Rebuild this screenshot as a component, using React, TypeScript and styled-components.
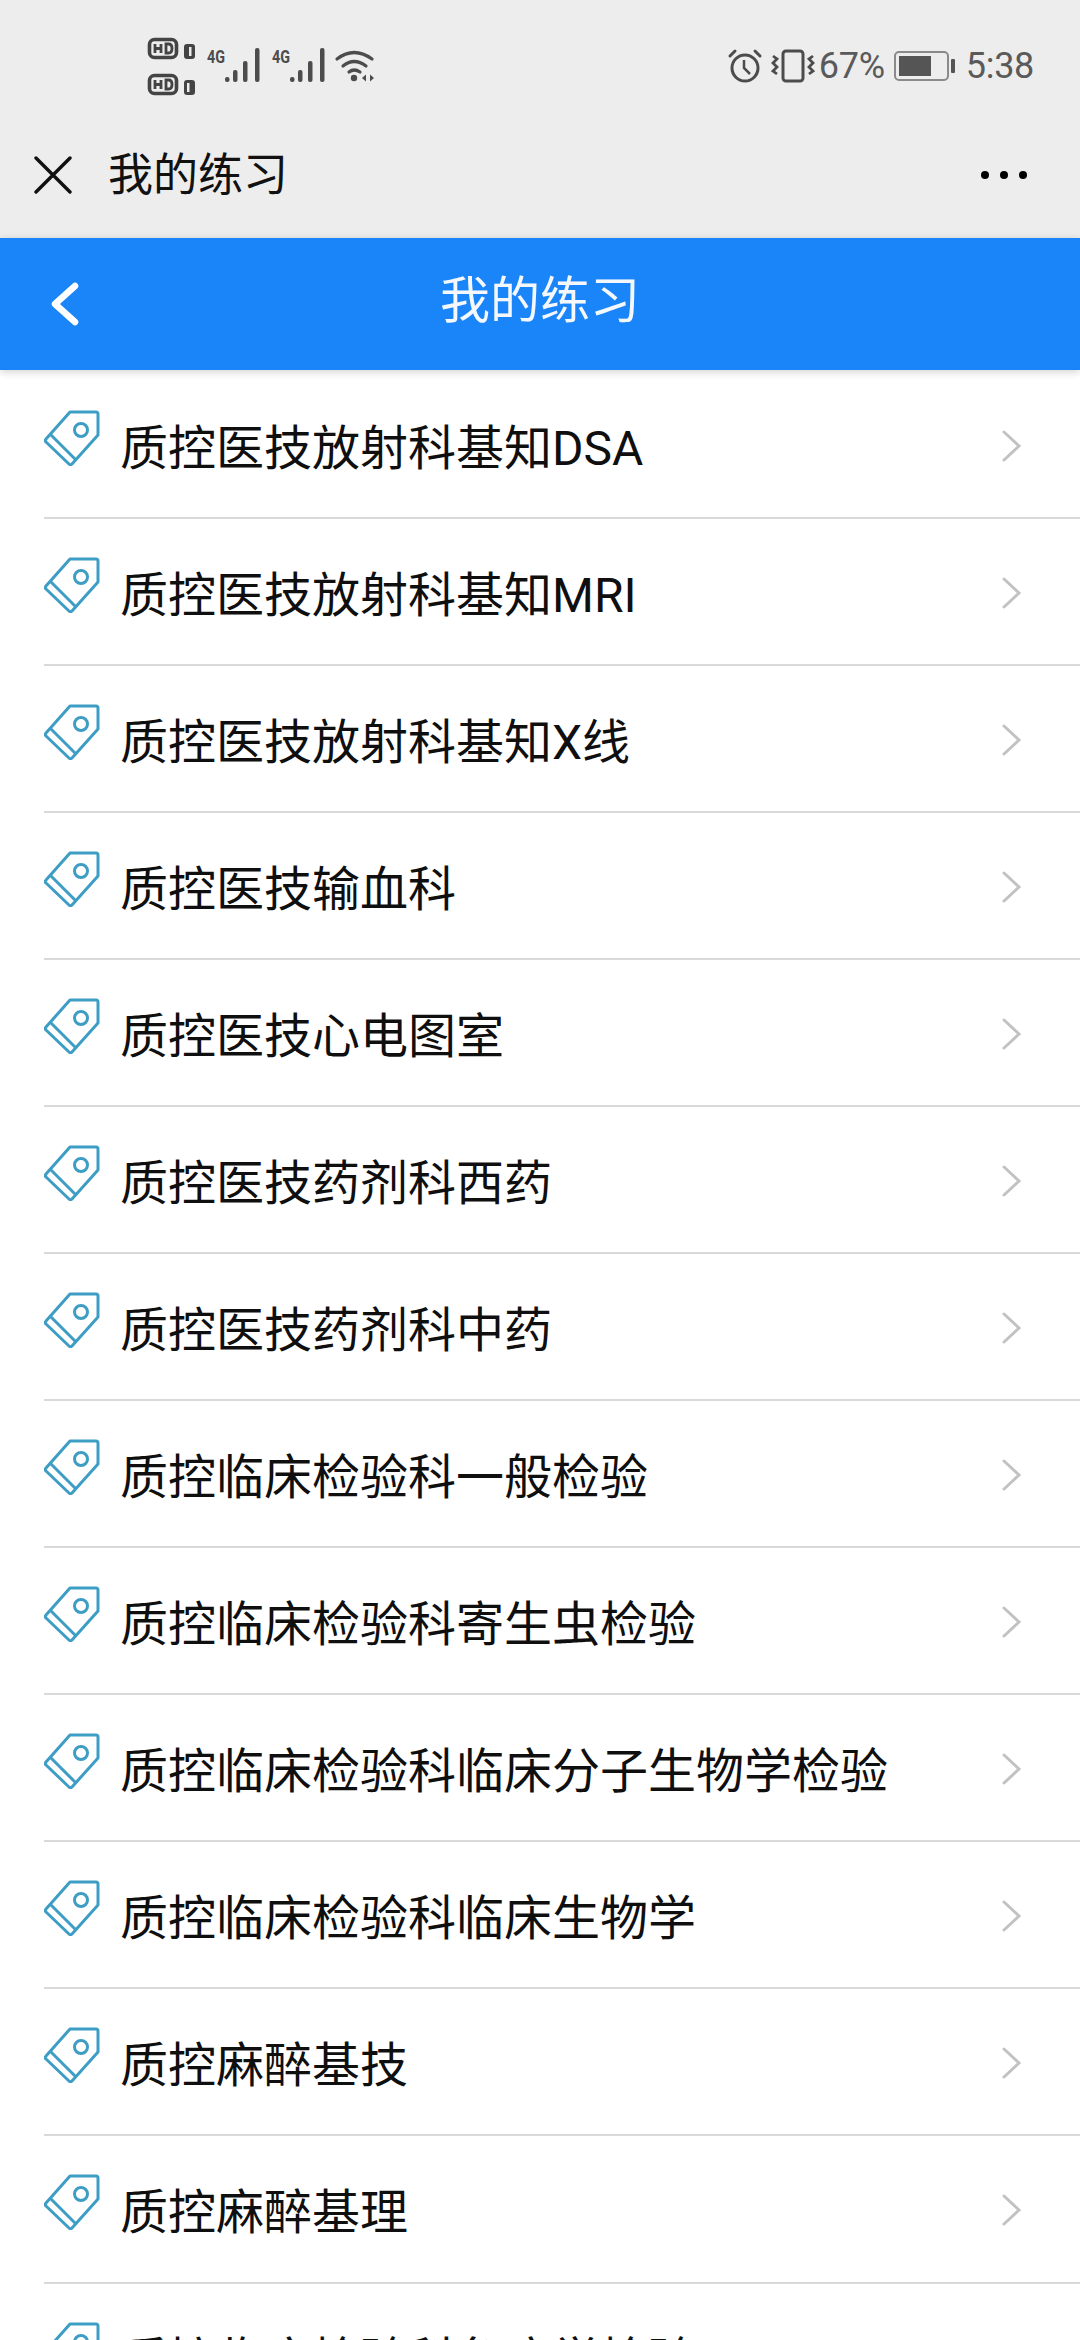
import React from 'react';
import styled, { createGlobalStyle } from 'styled-components';

const items = [
  '质控医技放射科基知DSA',
  '质控医技放射科基知MRI',
  '质控医技放射科基知X线',
  '质控医技输血科',
  '质控医技心电图室',
  '质控医技药剂科西药',
  '质控医技药剂科中药',
  '质控临床检验科一般检验',
  '质控临床检验科寄生虫检验',
  '质控临床检验科临床分子生物学检验',
  '质控临床检验科临床生物学',
  '质控麻醉基技',
  '质控麻醉基理',
  '质控临床检验科免疫学检验',
];

const GlobalStyle = createGlobalStyle`
  html, body {
    margin: 0;
    padding: 0;
    background: #fff;
  }
  body {
    font-family: "Roboto", "Noto Sans CJK SC", sans-serif;
  }
`;

const Page = styled.div`
  width: 1080px;
  height: 2340px;
  overflow: hidden;
  display: flex;
  flex-direction: column;
  background: #fff;
`;

const TopArea = styled.div`
  height: 238px;
  background: #ededed;
  display: flex;
  flex-direction: column;
  flex: none;
`;

const StatusBar = styled.div`
  height: 133px;
  padding: 33px 46px 0 146px;
  box-sizing: border-box;
  display: flex;
  justify-content: space-between;
  align-items: flex-start;
`;

const StatusGroup = styled.div`
  display: flex;
  align-items: center;
  height: 66px;
`;

const StatusSlot = styled.div<{ $left: number }>`
  display: flex;
  align-items: center;
  margin-left: ${(p) => p.$left}px;
`;

const HdStack = styled.div`
  display: flex;
  flex-direction: column;
  gap: 12px;
`;

const StatusIcon = styled.svg`
  display: block;
  overflow: visible;
`;

const StatusText = styled.span`
  font-size: 36px;
  line-height: 66px;
  color: #5a5a5a;
  letter-spacing: -0.3px;
`;

const BrowserBar = styled.div`
  height: 84px;
  padding: 0 52px 0 34px;
  display: flex;
  align-items: center;
  color: #111;
`;

const BrowserTitle = styled.div`
  font-size: 45px;
  margin-left: 36px;
  flex: 1;
  line-height: 1;
`;

const Header = styled.header`
  height: 132px;
  flex: none;
  background: #1a85f8;
  display: flex;
  align-items: center;
  position: relative;
  z-index: 1;
  padding-left: 50px;
  box-shadow: 0 2px 8px rgba(0, 0, 0, 0.18);
`;

const HeaderTitle = styled.h1`
  position: absolute;
  left: 0;
  right: 0;
  top: 0;
  margin: 0;
  text-align: center;
  font-size: 50px;
  font-weight: 400;
  line-height: 126px;
  color: #f4f8fd;
`;

const List = styled.ul`
  list-style: none;
  margin: 0;
  padding: 1.5px 0 0 44px;
`;

const Row = styled.li`
  height: 147.08px;
  box-sizing: border-box;
  border-bottom: 2px solid #d9d9d9;
  display: flex;
  align-items: flex-start;
  padding-right: 57px;
`;

const TagSlot = styled.div`
  width: 76px;
  flex: none;
  padding-top: 38px;
`;

const RowLabel = styled.div`
  flex: 1;
  font-size: 48px;
  line-height: 64px;
  padding-top: 45px;
  color: #0f0f0f;
  white-space: nowrap;
`;

const ChevronSlot = styled.div`
  flex: none;
  padding-top: 57px;
`;

function Hd({ n }: { n: string }) {
  return (
    <StatusIcon as="svg" width="50" height="24" viewBox="0 0 50 24">
      <rect x="3.5" y="3.5" width="27" height="18" rx="5" fill="none" stroke="#444" strokeWidth="3.6" />
      <path d="M9 8v9M15 8v9M9 12.5h6M20 8v9h2.5q3.5 0 3.5-4.5T22.5 8z" fill="none" stroke="#444" strokeWidth="2.8" />
      <rect x="38" y="8" width="11" height="15" rx="3" fill="#444" />
      <rect x={n === '1' ? 43 : 41} y="11" width="2.5" height="9" fill="#ededed" />
    </StatusIcon>
  );
}

function Signal() {
  return (
    <StatusIcon as="svg" width="56" height="36" viewBox="0 0 56 36" fill="#4c4c4c">
      <text x="2" y="15" fontSize="19" fontWeight="700" textLength="18" lengthAdjust="spacingAndGlyphs" fontFamily="'Roboto', sans-serif">4G</text>
      <rect x="20" y="29" width="4.5" height="5" rx="2" />
      <rect x="28" y="22" width="4.5" height="12" rx="2" />
      <rect x="38" y="13" width="4.5" height="21" rx="2" />
      <rect x="50" y="0" width="4.5" height="34" rx="2" />
    </StatusIcon>
  );
}

function Wifi() {
  return (
    <StatusIcon as="svg" width="40" height="34" viewBox="0 0 40 34" fill="none" stroke="#4c4c4c" strokeWidth="3.2" strokeLinecap="round">
      <path d="M2 10Q19 -3 37 10" />
      <path d="M8 17Q19 8 31 17" />
      <path d="M14 23Q19 19 25 23" />
      <circle cx="19" cy="29" r="3.2" fill="#4c4c4c" stroke="none" />
      <path d="M27 29l4-3.5v7zM39 29l-4-3.5v7z" fill="#4c4c4c" stroke="none" />
    </StatusIcon>
  );
}

function Alarm() {
  return (
    <StatusIcon as="svg" width="34" height="34" viewBox="0 0 34 34" fill="none" stroke="#4c4c4c" strokeWidth="3">
      <circle cx="17" cy="19" r="13" />
      <path d="M16 11v8l6 6" strokeWidth="2.5" />
      <path d="M2 7l5-5M32 7l-5-5" strokeLinecap="round" />
    </StatusIcon>
  );
}

function Vibrate() {
  return (
    <StatusIcon as="svg" width="44" height="34" viewBox="0 0 44 34" fill="none" stroke="#4c4c4c" strokeWidth="3">
      <rect x="12" y="2" width="20" height="30" rx="3" />
      <path d="M2 7l4 3-4 4 4 4-4 4 4 3" strokeWidth="2.8" />
      <path d="M42 7l-4 3 4 4-4 4 4 4-4 3" strokeWidth="2.8" />
    </StatusIcon>
  );
}

function Battery() {
  return (
    <StatusIcon as="svg" width="62" height="30" viewBox="0 0 62 30">
      <rect x="1" y="1" width="53" height="28" rx="4" fill="none" stroke="#8a8a8a" strokeWidth="2" />
      <rect x="5" y="5" width="32" height="20" fill="#555" />
      <rect x="57" y="8" width="4" height="14" rx="1" fill="#555" />
    </StatusIcon>
  );
}

function Dots() {
  return (
    <svg width="48" height="10" viewBox="0 0 48 10" fill="#000">
      <circle cx="5" cy="5" r="4" />
      <circle cx="24" cy="5" r="4" />
      <circle cx="43" cy="5" r="4" />
    </svg>
  );
}

function Close() {
  return (
    <svg width="38" height="38" viewBox="0 0 38 38" stroke="#111" strokeWidth="3.4" strokeLinecap="round">
      <path d="M2 2l34 34M36 2L2 36" />
    </svg>
  );
}

function Back() {
  return (
    <svg width="30" height="44" viewBox="0 0 30 44" fill="none" stroke="#fff" strokeWidth="6.5" strokeLinecap="round" strokeLinejoin="round">
      <path d="M25 4L5 22l20 18" />
    </svg>
  );
}

function Tag() {
  return (
    <svg width="58" height="56" viewBox="0 0 58 56" fill="none" stroke="#3d9dc4" strokeWidth="3" strokeLinejoin="round">
      <path d="M26 2h26a2 2 0 0 1 2 2v21L28 54a2 2 0 0 1-3 0L2 32a2 2 0 0 1 0-3z" />
      <path d="M7 25l25 25" />
      <circle cx="37" cy="20" r="6.5" />
    </svg>
  );
}

function Chevron() {
  return (
    <svg width="22" height="34" viewBox="0 0 22 34" fill="none" stroke="#c2c2c2" strokeWidth="3" strokeLinecap="round">
      <path d="M3 3l15 14L3 31" />
    </svg>
  );
}

export default function App() {
  return (
    <>
      <GlobalStyle />
      <Page>
        <TopArea>
          <StatusBar>
            <StatusGroup>
              <HdStack>
                <Hd n="1" />
                <Hd n="2" />
              </HdStack>
              <StatusSlot $left={9}><Signal /></StatusSlot>
              <StatusSlot $left={9}><Signal /></StatusSlot>
              <StatusSlot $left={9}><Wifi /></StatusSlot>
            </StatusGroup>
            <StatusGroup>
              <Alarm />
              <StatusSlot $left={9}><Vibrate /></StatusSlot>
              <StatusSlot $left={4}><StatusText>67%</StatusText></StatusSlot>
              <StatusSlot $left={9}><Battery /></StatusSlot>
              <StatusSlot $left={10}><StatusText>5:38</StatusText></StatusSlot>
            </StatusGroup>
          </StatusBar>
          <BrowserBar>
            <Close />
            <BrowserTitle>我的练习</BrowserTitle>
            <Dots />
          </BrowserBar>
        </TopArea>
        <Header>
          <Back />
          <HeaderTitle>我的练习</HeaderTitle>
        </Header>
        <List>
          {items.map((item) => (
            <Row key={item}>
              <TagSlot>
                <Tag />
              </TagSlot>
              <RowLabel>{item}</RowLabel>
              <ChevronSlot>
                <Chevron />
              </ChevronSlot>
            </Row>
          ))}
        </List>
      </Page>
    </>
  );
}
